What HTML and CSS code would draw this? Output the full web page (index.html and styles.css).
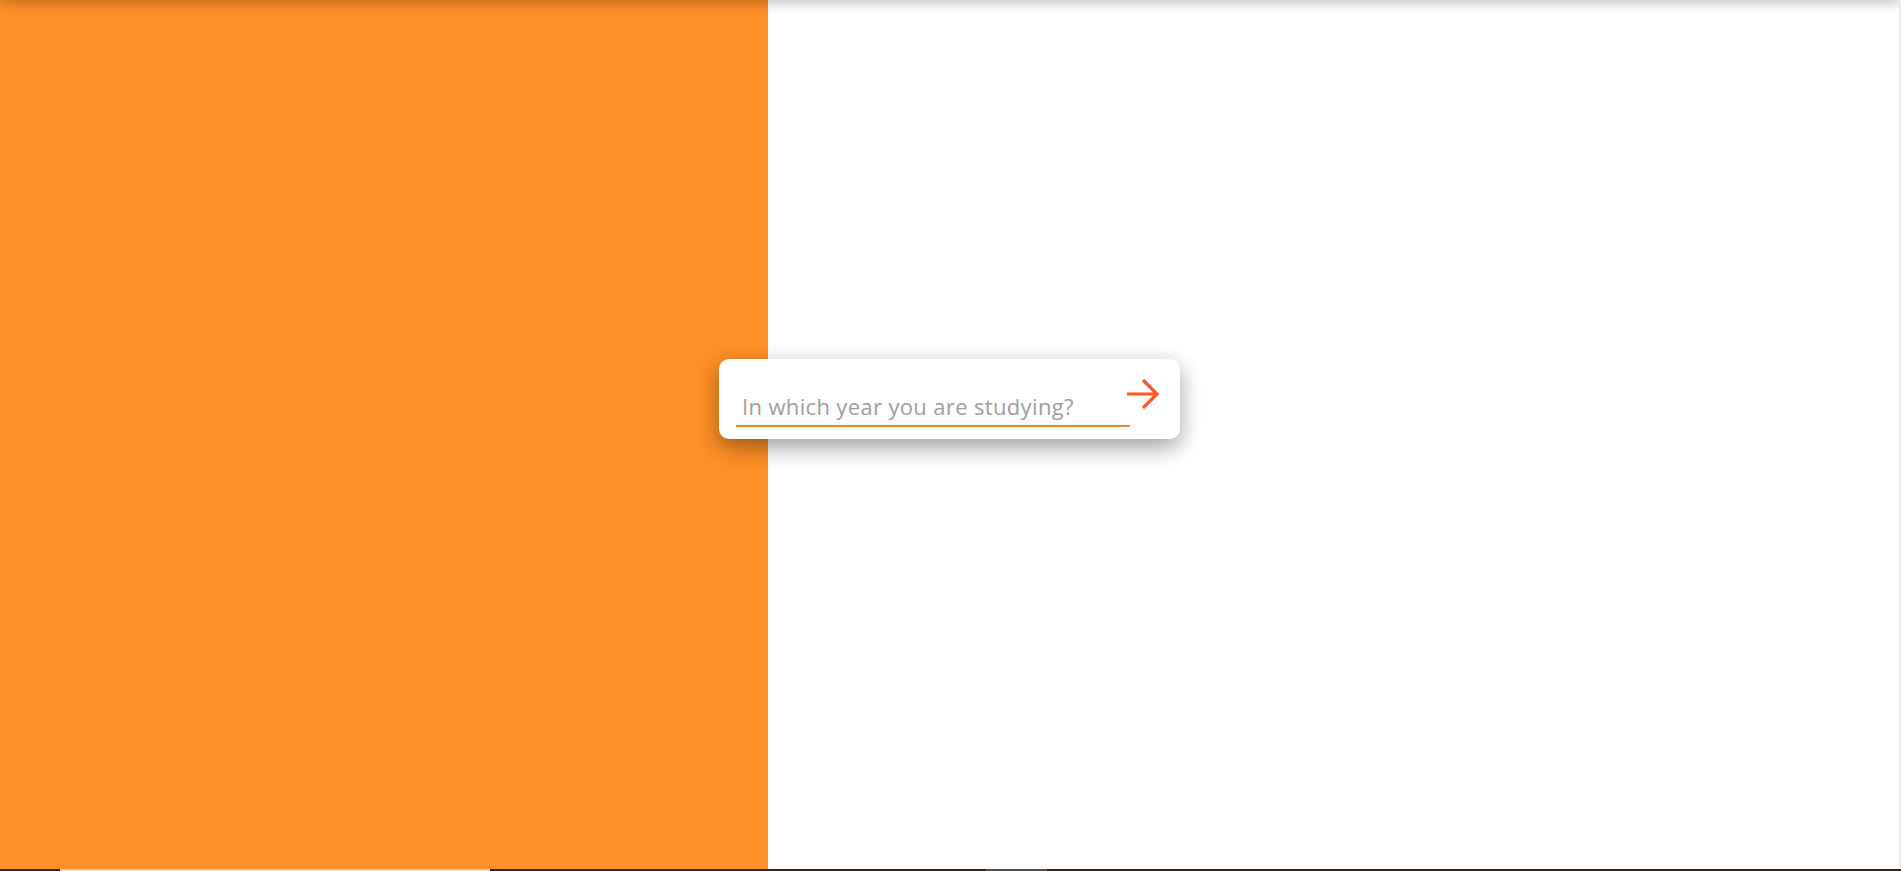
FILE: index.html
```html
<!DOCTYPE html>
<html lang="en">
<head>
<meta charset="utf-8">
<title>Question</title>
<link rel="stylesheet" href="styles.css">
</head>
<body>
<div class="screen">
  <div class="page">
    <div class="split">
      <div class="panel-left"></div>
      <div class="panel-right"></div>
    </div>
    <div class="top-shadow"></div>
    <form class="card" onsubmit="return false">
      <input class="answer" type="text" placeholder="In which year you are studying?" autofocus>
      <button class="next" type="submit" aria-label="Next">
        <svg viewBox="0 0 34 34" width="34" height="34">
          <path d="M1 17 H31 M17 3 L31 17 L17 31" fill="none" stroke="#ff5722" stroke-width="3.2" stroke-linecap="butt" stroke-linejoin="miter"/>
        </svg>
      </button>
    </form>
    <div class="scrollbar"></div>
  </div>
  <div class="taskbar">
    <span class="tb-dark tb-a"></span>
    <span class="tb-light"></span>
    <span class="tb-dark tb-b"></span>
    <span class="tb-mid"></span>
    <span class="tb-dark tb-c"></span>
  </div>
</div>
</body>
</html>
```

FILE: styles.css
```css
html, body {
  margin: 0;
  padding: 0;
  height: 100%;
  overflow: hidden;
  background: #fff;
}
.screen {
  display: flex;
  flex-direction: column;
  height: 871px;
}
.page {
  position: relative;
  height: 869px;
  overflow: hidden;
}
.split {
  display: flex;
  height: 100%;
}
.panel-left {
  width: 768px;
  background: #ff8f26;
}
.panel-right {
  flex: 1;
  background: #fff;
}
.top-shadow {
  position: absolute;
  left: 0;
  right: 0;
  top: -20px;
  height: 20px;
  box-shadow: 0 2px 14px rgba(0, 0, 0, 0.28);
}
.scrollbar {
  position: absolute;
  top: 0;
  right: 0;
  width: 2px;
  height: 100%;
  background: #ececec;
}
.card {
  position: absolute;
  left: 719px;
  top: 359px;
  width: 461px;
  height: 80px;
  box-sizing: border-box;
  margin: 0;
  padding: 22px 0 0 17px;
  display: flex;
  align-items: flex-start;
  background: #fff;
  border-radius: 10px;
  box-shadow: 0 8px 22px rgba(0, 0, 0, 0.38);
}
.answer {
  width: 394px;
  height: 46px;
  box-sizing: border-box;
  margin: 0;
  padding: 6px 0 0 6px;
  border: 0;
  border-bottom: 2px solid #f7862a;
  outline: none;
  background: transparent;
  font-family: "Open Sans", sans-serif;
  font-size: 22px;
  letter-spacing: 0.35px;
  color: #777;
  caret-color: #8a8a8a;
}
.answer::placeholder {
  color: #9e9e9e;
  opacity: 1;
}
.next {
  margin: -4px 0 0 -4px;
  padding: 0;
  border: 0;
  background: transparent;
  width: 34px;
  height: 34px;
  cursor: pointer;
}
.next svg {
  display: block;
}
.taskbar {
  display: flex;
  height: 2px;
}
.tb-dark {
  background: #2b2522;
}
.tb-a { width: 60px; }
.tb-light { width: 430px; background: #dcdcdc; }
.tb-b { width: 496px; }
.tb-mid { width: 61px; background: #555150; }
.tb-c { flex: 1; }
```
